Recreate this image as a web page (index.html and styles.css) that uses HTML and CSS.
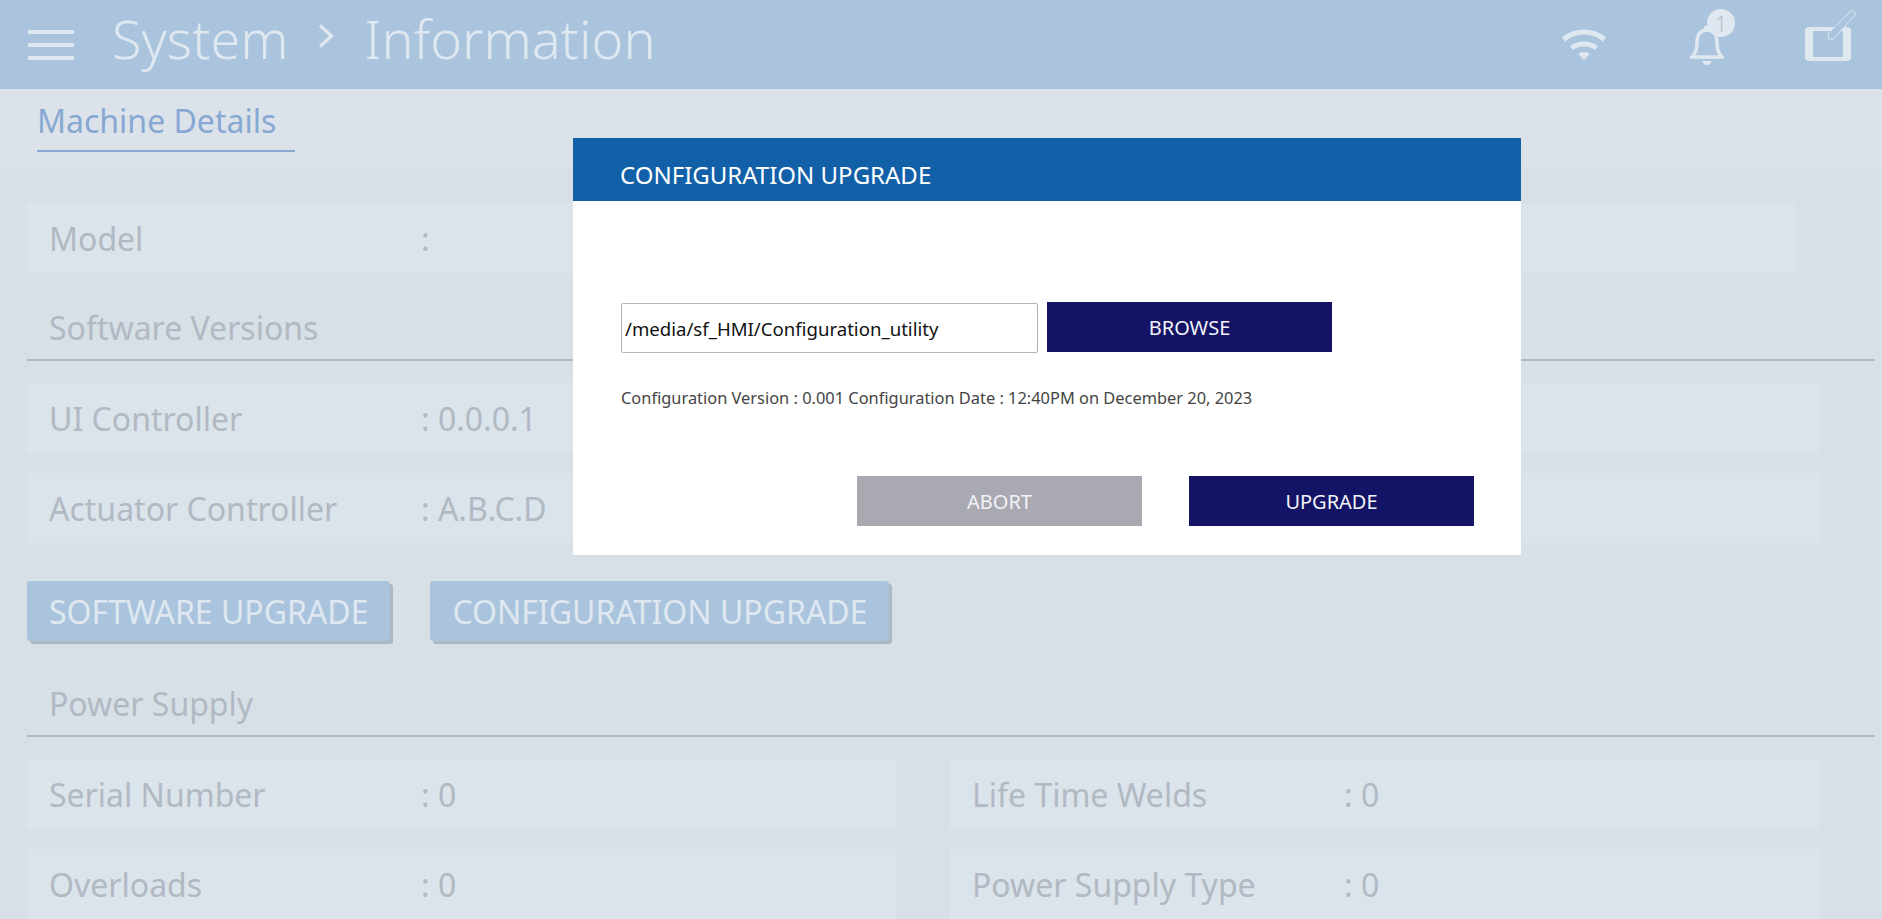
FILE: index.html
```html
<!DOCTYPE html>
<html lang="en">
<head>
  <meta charset="UTF-8">
  <title>System Information</title>
  <link rel="stylesheet" href="styles.css">
</head>
<body>

  <header class="topbar">
    <div class="hamburger"><span></span><span></span><span></span></div>
    <h1 class="crumbs">
      <span>System</span>
      <svg class="crumb-sep" width="16" height="24" viewBox="0 0 16 24"><path d="M2 1.500 L13.500 12 L2 22.500" fill="none" stroke="#dfe8f0" stroke-width="3.200"/></svg>
      <span>Information</span>
    </h1>
    <div class="status-icons">
      <svg class="icon-wifi" width="46" height="34" viewBox="0 0 46 34">
        <path d="M2.500 11.500 C14 1.500 32 1.500 43.500 11.500" fill="none" stroke="#dfe8f0" stroke-width="5"/>
        <path d="M10.500 20 C17 14.500 29 14.500 35.500 20" fill="none" stroke="#dfe8f0" stroke-width="5"/>
        <path d="M17.500 26 C20.500 23.400 25.500 23.400 28.500 26 L23 32 Z" fill="#dfe8f0"/>
      </svg>
      <div class="bell">
        <svg width="36" height="44" viewBox="0 0 36 44">
          <path d="M3 34 C7 30 8 26 8 20 C8 11 12 7 18 7 C24 7 28 11 28 20 C28 26 29 30 33 34 Z" fill="none" stroke="#dfe8f0" stroke-width="3.400" stroke-linejoin="round"/>
          <path d="M1 33 H35 V35.500 H1 Z M13.500 38 H22.500 C22 41 20 42 18 42 C16 42 14 41 13.500 38 Z M15 3 H21 V7 H15 Z" fill="#dfe8f0"/>
        </svg>
        <span class="bell-badge">1</span>
      </div>
      <svg class="icon-tablet" width="56" height="54" viewBox="0 0 56 54">
        <path fill-rule="evenodd" d="M4 18 H42 Q46 18 46 22 V48 Q46 52 42 52 H4 Q0 52 0 48 V22 Q0 18 4 18 Z M8 22 V48 H38 V22 Z" fill="#dfe8f0"/>
        <path d="M23.300 24.300 L46.700 1 L51 5 L28.300 30 H23.300 Z" fill="#abc4de" stroke="#dfe8f0" stroke-width="1"/>
      </svg>
    </div>
  </header>

  <nav class="tabs">
    <a class="tab">Machine Details</a>
  </nav>

  <main class="content">
    <div class="tile tile-model"><span class="tile-label">Model</span><span>:</span></div>

    <h2 class="section-title">Software Versions</h2>
    <div class="tile-grid">
      <div class="tile"><span class="tile-label">UI Controller</span><span>: 0.0.0.1</span></div>
      <div class="tile"></div>
      <div class="tile"><span class="tile-label">Actuator Controller</span><span>: A.B.C.D</span></div>
      <div class="tile"></div>
    </div>

    <div class="upgrade-row">
      <button class="upgrade-btn">SOFTWARE UPGRADE</button>
      <button class="upgrade-btn">CONFIGURATION UPGRADE</button>
    </div>

    <h2 class="section-title">Power Supply</h2>
    <div class="tile-grid">
      <div class="tile"><span class="tile-label">Serial Number</span><span>: 0</span></div>
      <div class="tile"><span class="tile-label">Life Time Welds</span><span>: 0</span></div>
      <div class="tile"><span class="tile-label">Overloads</span><span>: 0</span></div>
      <div class="tile"><span class="tile-label">Power Supply Type</span><span>: 0</span></div>
    </div>
  </main>

  <div class="modal">
    <div class="modal-head">CONFIGURATION UPGRADE</div>
    <div class="modal-body">
      <div class="path-row">
        <input class="path-input" type="text" value="/media/sf_HMI/Configuration_utility">
        <button class="btn btn-navy btn-browse">BROWSE</button>
      </div>
      <p class="config-info">Configuration Version : 0.001 Configuration Date : 12:40PM on December 20, 2023</p>
      <div class="modal-actions">
        <button class="btn btn-grey">ABORT</button>
        <button class="btn btn-navy">UPGRADE</button>
      </div>
    </div>
  </div>

</body>
</html>
```

FILE: styles.css
```css
body {
  margin: 0;
  height: 919px;
  overflow: hidden;
  position: relative;
  background: #d7dfe7;
  font-family: 'Noto Sans', 'Open Sans', sans-serif;
}
.topbar {
  height: 89px;
  background: #abc4de;
  display: flex;
  align-items: center;
  padding-left: 28px;
  color: #dfe8f0;
}
.hamburger {
  width: 46px;
  display: flex;
  flex-direction: column;
  gap: 9px;
}
.hamburger span {
  height: 4px;
  background: #dfe8f0;
}
.crumbs {
  display: flex;
  align-items: center;
  margin: 0 0 13px 38px;
  font-size: 54px;
  font-weight: 300;
  line-height: 70px;
}
.crumb-sep {
  margin: 0 31px 4px 29px;
}
.status-icons {
  margin-left: auto;
  display: flex;
  align-items: flex-start;
  height: 89px;
  position: relative;
  width: 330px;
}
.icon-wifi {
  position: absolute;
  left: 9px;
  top: 28px;
}
.bell {
  position: absolute;
  left: 137px;
  top: 23px;
}
.bell-badge {
  position: absolute;
  left: 18px;
  top: -14px;
  width: 28px;
  height: 28px;
  border-radius: 50%;
  background: #dfe8f0;
  color: #b4bcc6;
  font-size: 22px;
  font-weight: 300;
  line-height: 28px;
  text-align: center;
}
.icon-tablet {
  position: absolute;
  left: 253px;
  top: 9px;
}
.tabs {
  height: 80px;
  background: #dbe2ea;
  padding-left: 37px;
}
.tab {
  display: inline-block;
  width: 258px;
  height: 61px;
  line-height: 64px;
  border-bottom: 2px solid #87a8d2;
  font-size: 32px;
  color: #87a8d2;
}
.content {
  padding: 34px 7px 0 27px;
  color: #b1b9c3;
  font-size: 32px;
}
.tile {
  height: 70px;
  background: #dbe3eb;
  display: flex;
  align-items: center;
  padding-left: 22px;
}
.tile-model {
  width: 1746px;
}
.tile-label {
  width: 372px;
}
.section-title {
  margin: 0;
  height: 88px;
  line-height: 110px;
  padding-left: 22px;
  box-sizing: border-box;
  border-bottom: 2px solid #aeb7c4;
  font-size: 32px;
  font-weight: 400;
}
.tile-grid {
  display: grid;
  grid-template-columns: 869px 870px;
  column-gap: 54px;
  row-gap: 20px;
  margin-top: 22px;
}
.upgrade-row {
  display: flex;
  gap: 40px;
  margin: 38px 0 8px;
}
.upgrade-btn {
  height: 60px;
  padding: 0 22px;
  background: #abc4de;
  border: none;
  border-radius: 3px;
  box-shadow: 3px 3px 0 #aeb7c4;
  color: #dfe8f0;
  font: inherit;
}
.modal {
  position: absolute;
  left: 573px;
  top: 138px;
  width: 948px;
  height: 417px;
  background: #fff;
}
.modal-head {
  height: 63px;
  line-height: 73px;
  padding-left: 47px;
  background: #1260a8;
  color: #fff;
  font-size: 24px;
}
.modal-body {
  padding: 101px 47px 0 48px;
}
.path-row {
  display: flex;
  gap: 9px;
  align-items: flex-start;
}
.path-input {
  width: 417px;
  height: 50px;
  box-sizing: border-box;
  margin-top: 1px;
  padding: 0 3px;
  border: 1px solid #b5b5b5;
  border-radius: 2px;
  font: 18.6px 'Noto Sans', 'Open Sans', sans-serif;
  color: #111;
}
.btn {
  width: 285px;
  height: 50px;
  border: none;
  color: #f2f3f8;
  font: 20px 'Noto Sans', 'Open Sans', sans-serif;
}
.btn-navy {
  background: #131465;
}
.btn-grey {
  background: #a9a9b1;
}
.config-info {
  margin: 33px 0 0;
  font-size: 16.4px;
  line-height: 24px;
  color: #444;
}
.modal-actions {
  display: flex;
  justify-content: flex-end;
  gap: 47px;
  margin-top: 66px;
}
```
